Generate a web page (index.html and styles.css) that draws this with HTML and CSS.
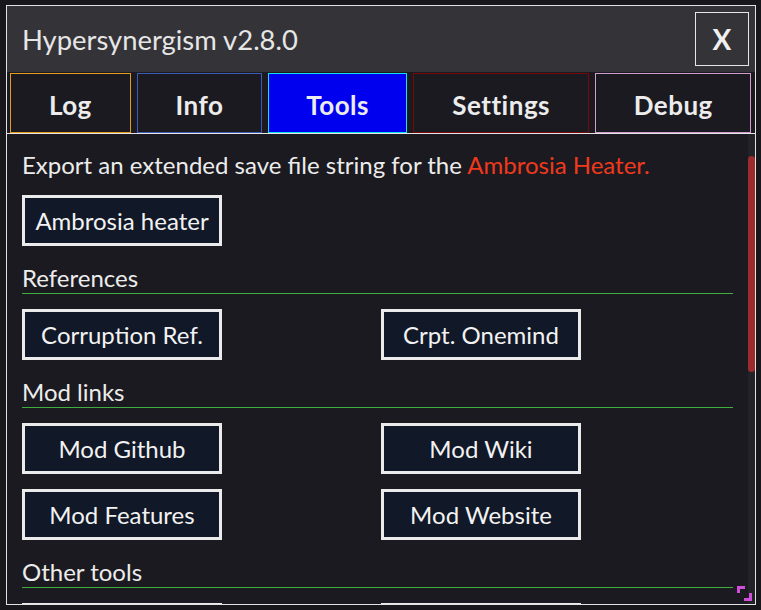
FILE: index.html
```html
<!DOCTYPE html>
<html lang="en">
<head>
<meta charset="utf-8">
<title>Hypersynergism v2.8.0</title>
<link rel="stylesheet" href="styles.css">
</head>
<body>
<div class="window">
  <header class="titlebar">
    <h1 class="title">Hypersynergism v2.8.0</h1>
    <button class="close">X</button>
  </header>
  <nav class="tabs">
    <button class="tab tab-log">Log</button>
    <button class="tab tab-info">Info</button>
    <button class="tab tab-tools">Tools</button>
    <button class="tab tab-settings">Settings</button>
    <button class="tab tab-debug">Debug</button>
  </nav>
  <div class="body">
    <main class="panel">
      <p class="intro">Export an extended save file string for the <span class="hl">Ambrosia Heater.</span></p>
      <div class="grid">
        <button class="btn">Ambrosia heater</button>
      </div>
      <h2 class="section">References</h2>
      <div class="grid">
        <button class="btn">Corruption Ref.</button>
        <button class="btn">Crpt. Onemind</button>
      </div>
      <h2 class="section">Mod links</h2>
      <div class="grid">
        <button class="btn">Mod Github</button>
        <button class="btn">Mod Wiki</button>
        <button class="btn">Mod Features</button>
        <button class="btn">Mod Website</button>
      </div>
      <h2 class="section">Other tools</h2>
      <div class="grid">
        <button class="btn" aria-hidden="true"></button>
        <button class="btn" aria-hidden="true"></button>
      </div>
    </main>
    <div class="scrollbar"><div class="thumb"></div></div>
  </div>
  <svg class="resize" width="16" height="15" viewBox="0 0 16 15" aria-hidden="true">
    <rect x="0" y="0" width="8" height="3"/>
    <rect x="0" y="0" width="3" height="7"/>
    <rect x="12" y="7" width="3" height="8"/>
    <rect x="7" y="12" width="8" height="3"/>
  </svg>
</div>
</body>
</html>
```

FILE: styles.css
```css
* { box-sizing: border-box; }

body {
  margin: 0;
  background: #18171c;
  font-family: Lato, "Open Sans", sans-serif;
  color: #ececec;
}

.window {
  position: relative;
  margin: 5px 0 0 6px;
  width: 750px;
  height: 600px;
  border: 1px solid #e2e2e2;
  background: #1b1a20;
  display: flex;
  flex-direction: column;
  overflow: hidden;
}

.titlebar {
  height: 66px;
  flex: none;
  background: #343338;
  display: flex;
  align-items: center;
  justify-content: space-between;
  padding: 6px 6px 6px 15px;
}

.title {
  margin: 0;
  font-size: 27.4px;
  font-weight: 400;
  color: #e6e6e6;
}

.close {
  width: 54px;
  height: 54px;
  border: 1px solid #e6e6e6;
  background: transparent;
  color: #f0f0f0;
  font-family: inherit;
  font-size: 28px;
  font-weight: 700;
  padding: 0;
}

.tabs {
  flex: none;
  display: grid;
  grid-template-columns: 121fr 126fr 139fr 177fr 156fr;
  column-gap: 6px;
  padding: 1px 4px 0 3px;
  border-bottom: 1px solid #e6e6e6;
}

.tab {
  height: 60px;
  border: 1px solid;
  background: #1b1a20;
  color: #ececec;
  font-family: inherit;
  font-size: 26px;
  font-weight: 700;
  letter-spacing: 0.5px;
  padding: 3px 0 0;
}

.tab-log { border-color: #e39d1d; }
.tab-info { border-color: #3a5cb4; }
.tab-tools { border-color: #14e0ee; background: #0000ee; }
.tab-settings { border-color: #760808; }
.tab-debug { border-color: #cf9dcf; }

.body {
  flex: 1;
  min-height: 0;
  display: flex;
}

.panel {
  flex: 1;
  min-width: 0;
  overflow: hidden;
  padding: 16px 15px 0;
}

.intro {
  margin: 0;
  font-size: 24px;
  line-height: 30px;
  color: #ececec;
}

.hl { color: #f0391c; }

.grid {
  margin-top: 15px;
  display: grid;
  grid-template-columns: 1fr 1fr;
  column-gap: 7px;
  row-gap: 15px;
}

.btn {
  width: 200px;
  height: 51px;
  border: 3px solid #ebebeb;
  background: #111827;
  color: #f2f2f2;
  font-family: inherit;
  font-size: 24px;
  padding: 0;
}

.section {
  margin: 17px 0 0;
  font-size: 24px;
  font-weight: 400;
  line-height: 30px;
  color: #ececec;
  border-bottom: 1px solid #3fae3f;
}

.scrollbar {
  flex: none;
  width: 7px;
  background: #222229;
}

.thumb {
  margin-top: 22px;
  height: 216px;
  border-radius: 4px;
  background: #9b2b2d;
}

.resize {
  position: absolute;
  right: 2px;
  bottom: 3px;
  fill: #d14fd8;
}
```
